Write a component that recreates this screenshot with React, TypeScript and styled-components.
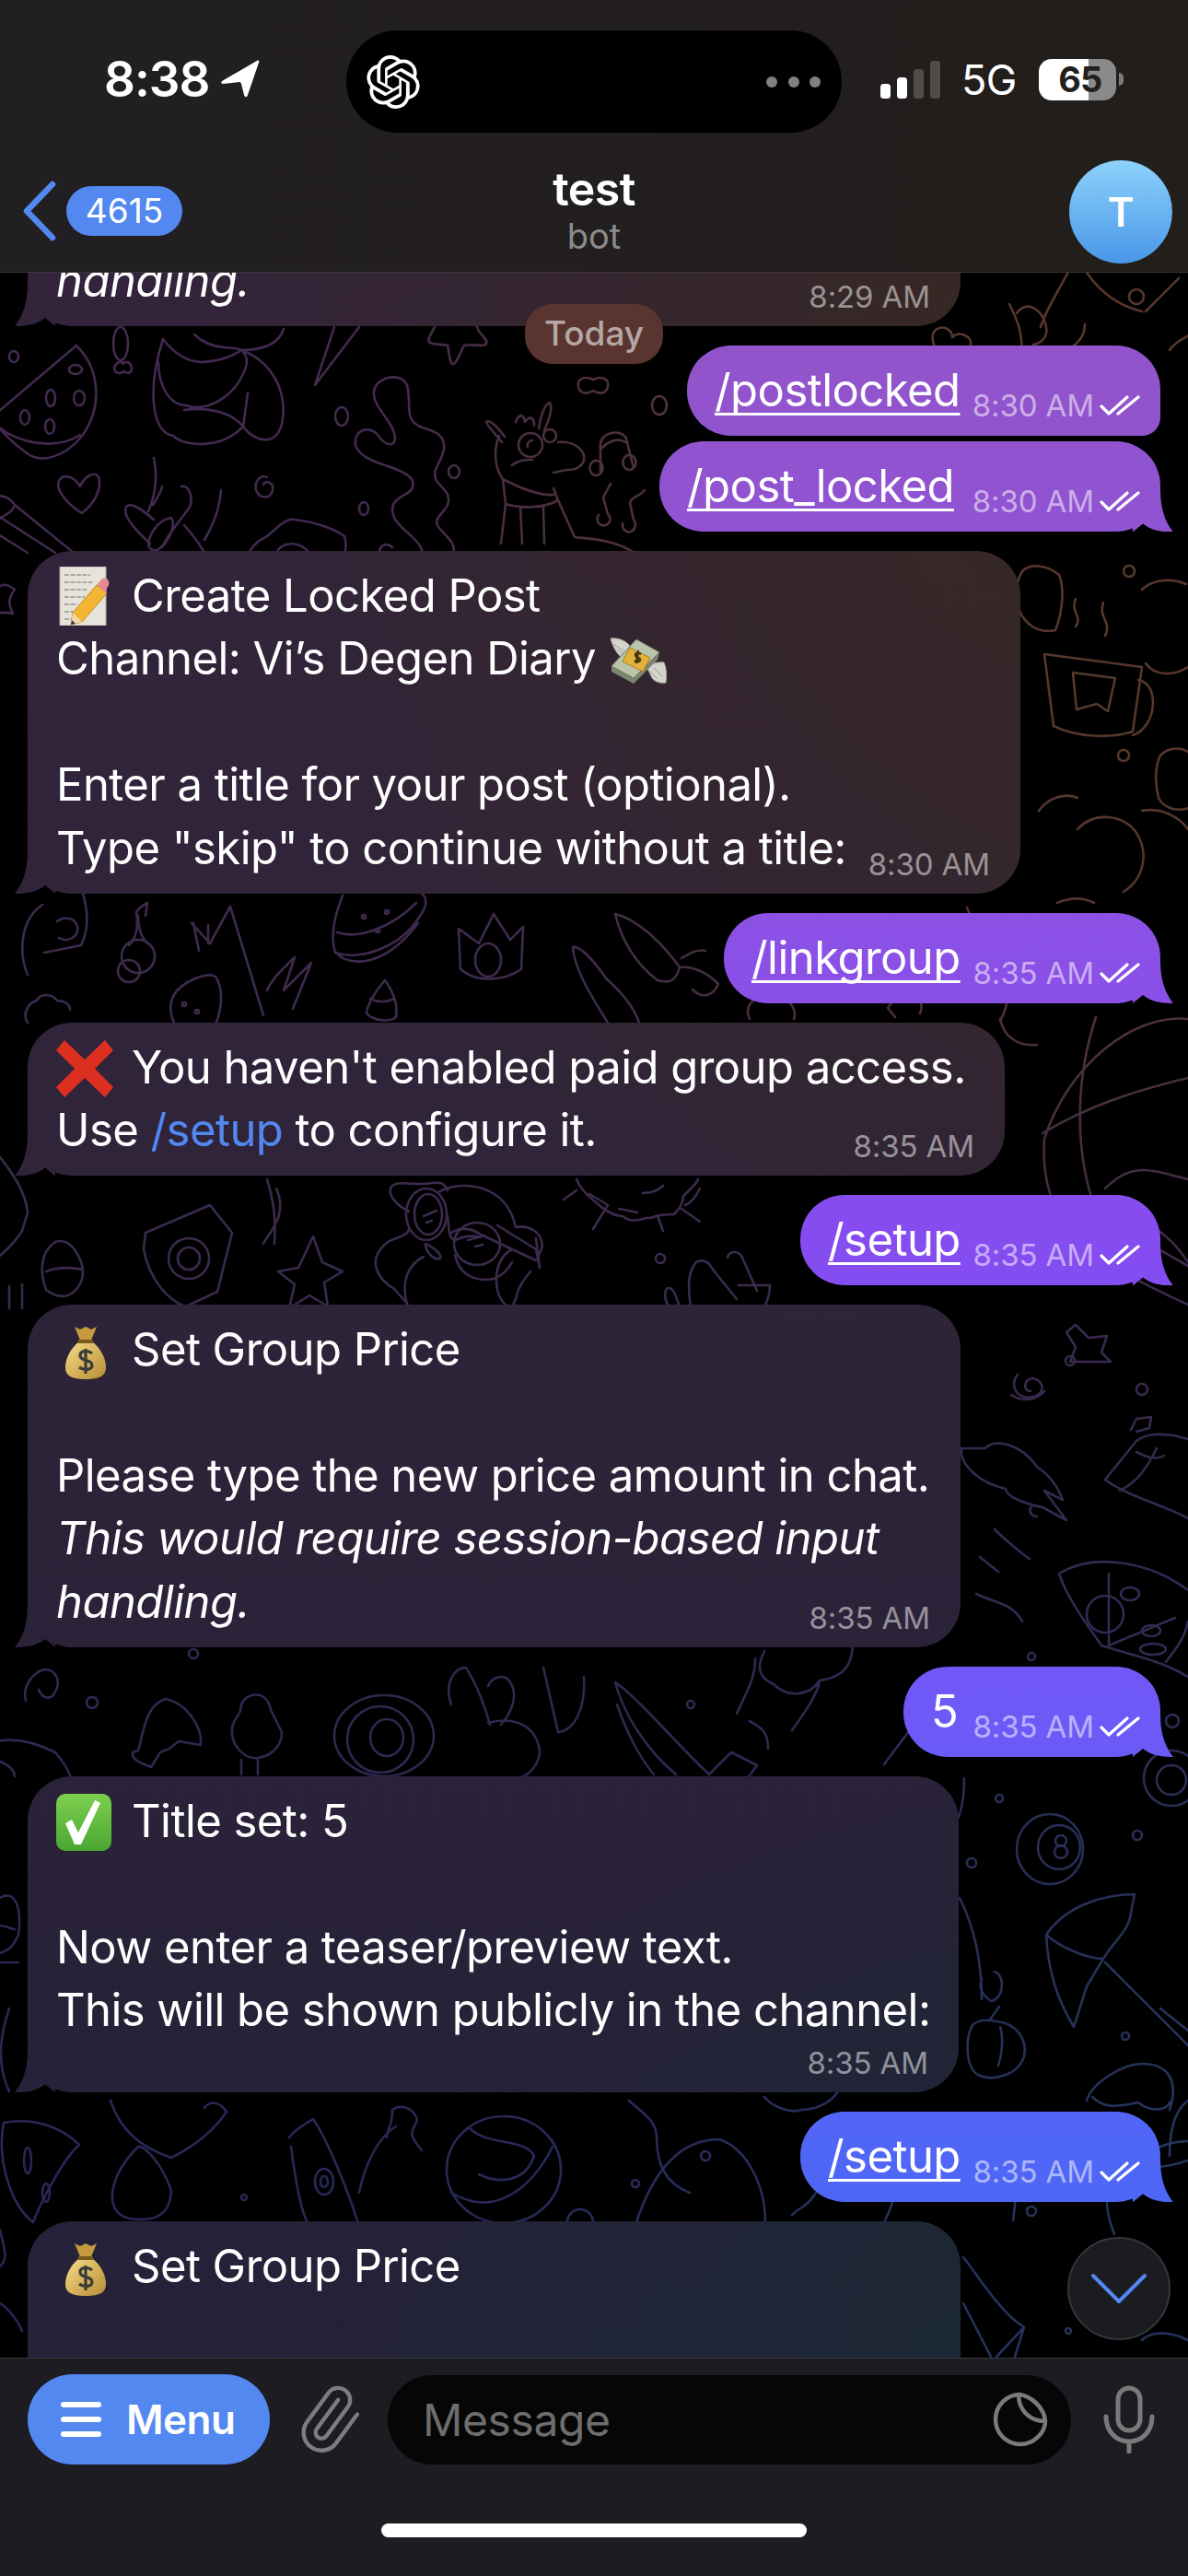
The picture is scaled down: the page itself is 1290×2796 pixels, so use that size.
import React from "react";
import styled, { createGlobalStyle } from "styled-components";
import { Paperclip } from "lucide-react";
import { SiOpenai } from "react-icons/si";

const Global = createGlobalStyle`
  html, body { margin: 0; padding: 0; background: #000; }
  body { font-family: Inter, "Liberation Sans", sans-serif; color: #fff; -webkit-font-smoothing: antialiased; }
`;

const OUT_BG = `linear-gradient(180deg,#9a50b8 0px,#9254cc 420px,#8b50e6 1040px,#864cf0 1340px,#6e59f7 1860px,#4f66f6 2340px,#4a6af6 2796px) fixed`;
const IN_BG = `radial-gradient(1100px 1300px at 100% 300px,#38291f,rgba(56,41,31,0)) fixed,radial-gradient(1000px 800px at 100% 2700px,#182a33,rgba(24,42,51,0)) fixed,linear-gradient(180deg,#34233b 0px,#30243a 1200px,#292238 2000px,#22213a 2796px) fixed`;

const Screen = styled.div`
  position: relative;
  width: 1290px;
  height: 2796px;
  overflow: hidden;
  display: flex;
  flex-direction: column;
  background: #000;
`;
const Top = styled.header`
  flex: none;
  height: 295px;
  background: linear-gradient(90deg, #221f23, #221e1b);
  border-bottom: 1px solid #3a3638;
  position: relative;
  z-index: 2;
`;
const StatusBar = styled.div`
  display: grid;
  grid-template-columns: 376px 538px 1fr;
  height: 144px;
  padding-top: 33px;
  box-sizing: border-box;
`;
const StatusLeft = styled.div`
  display: flex;
  align-items: center;
  padding: 0 0 6px 113px;
  gap: 13px;
  font-weight: 600;
  font-size: 53px;
  letter-spacing: -1px;
`;
const Island = styled.div`
  height: 111px;
  background: #000;
  border-radius: 56px;
  display: flex;
  align-items: center;
  justify-content: space-between;
  padding: 0 23px 0 22px;
`;
const Dots = styled.div`
  display: flex;
  gap: 11.5px;
  & > i {
    width: 12px;
    height: 12px;
    border-radius: 50%;
    background: #808080;
  }
`;
const StatusRight = styled.div`
  display: flex;
  align-items: flex-start;
  padding: 33px 0 0 42px;
`;
const Signal = styled.div`
  display: flex;
  align-items: flex-end;
  gap: 7px;
  height: 41px;
`;
const SignalBar = styled.i<{ $h: number; $on?: boolean }>`
  width: 11px;
  height: ${(p) => p.$h}px;
  border-radius: 3.5px;
  background: ${(p) => (p.$on ? "#fff" : "#504c4a")};
`;
const Net = styled.span`
  font-size: 45px;
  line-height: 41px;
  margin: 0 24px 0 23px;
  font-weight: 400;
  letter-spacing: -0.6px;
`;
const Battery = styled.div`
  width: 84px;
  height: 45px;
  margin-top: -2px;
  border-radius: 14px;
  background: linear-gradient(90deg, #fff 64%, #8a8a8a 64%);
  color: #221f1e;
  font-weight: 700;
  font-size: 38px;
  line-height: 45px;
  text-align: center;
  padding-left: 6px;
  box-sizing: border-box;
  position: relative;
  letter-spacing: -1px;
  &::after {
    content: "";
    position: absolute;
    right: -8px;
    top: 15px;
    width: 5px;
    height: 14px;
    background: #7c7c7c;
    border-radius: 0 6px 6px 0;
  }
`;
const Nav = styled.div`
  display: grid;
  grid-template-columns: 1fr auto 1fr;
  align-items: start;
  padding: 30px 17px 0 17px;
`;
const Back = styled.div`
  display: flex;
  align-items: center;
  gap: 10px;
  padding: 22px 0 0 7px;
`;
const Badge = styled.span`
  width: 126px;
  height: 54px;
  border-radius: 27px;
  background: #5288f0;
  font-size: 37px;
  line-height: 54px;
  text-align: center;
`;
const Title = styled.div`
  text-align: center;
  padding-top: 3px;
  & > b {
    display: block;
    font-size: 50px;
    line-height: 56px;
    font-weight: 600;
    letter-spacing: -0.6px;
  }
  & > span {
    display: block;
    font-size: 38px;
    line-height: 46px;
    color: #8b8b8b;
  }
`;
const Avatar = styled.div`
  justify-self: end;
  width: 112px;
  height: 112px;
  border-radius: 50%;
  background: linear-gradient(180deg, #8cd2fb, #4a96e8);
  font-size: 44px;
  font-weight: 600;
  line-height: 112px;
  text-align: center;
`;

const Chat = styled.main`
  flex: 1;
  min-height: 0;
  position: relative;
  overflow: hidden;
`;
const Doodles = styled.svg`
  position: absolute;
  left: 0;
  top: -296px;
  width: 1290px;
  height: 2796px;
`;
const List = styled.div`
  position: relative;
  display: flex;
  flex-direction: column;
  gap: 20.6px;
  padding: 0 30px;
  margin-top: -314px;
`;
const Group = styled.div`
  display: flex;
  flex-direction: column;
  gap: 6px;
`;
const BubbleBox = styled.div<{ $out?: boolean; $w: number; $tail?: boolean; $pb?: number }>`
  position: relative;
  box-sizing: border-box;
  width: ${(p) => p.$w}px;
  align-self: ${(p) => (p.$out ? "flex-end" : "flex-start")};
  padding: 15px ${(p) => (p.$out ? 22 : 20)}px ${(p) => p.$pb ?? 15}px ${(p) => (p.$out ? 30 : 31)}px;
  border-radius: 48px;
  ${(p) => (p.$out && !p.$tail ? "border-bottom-right-radius: 20px;" : "")}
  background: ${(p) => (p.$out ? OUT_BG : IN_BG)};
  font-size: 49px;
  line-height: 68.4px;
  letter-spacing: -0.55px;
  white-space: pre;
  ${(p) =>
    p.$tail
      ? `&::after {
    content: "";
    position: absolute;
    bottom: 0;
    ${p.$out ? "right" : "left"}: -14px;
    width: 44px;
    height: 46px;
    background: ${p.$out ? OUT_BG : IN_BG};
    clip-path: path("${
      p.$out
        ? "M30 0 C30 22 36 36 44 46 C30 46 20 44 11 37 L0 46 L0 0 Z"
        : "M14 0 C14 22 8 36 0 46 C14 46 24 44 33 37 L44 46 L44 0 Z"
    }");
  }`
      : ""}
`;
const Meta = styled.div<{ $out?: boolean }>`
  position: absolute;
  z-index: 1;
  right: ${(p) => (p.$out ? 22 : 33)}px;
  bottom: ${(p) => (p.$out ? 15 : 14)}px;
  display: flex;
  align-items: center;
  gap: 6px;
  font-size: 33px;
  line-height: 36px;
  letter-spacing: -0.1px;
  color: ${(p) => (p.$out ? "rgba(255,255,255,.55)" : "rgba(255,255,255,.5)")};
`;
const Cmd = styled.a`
  color: #fff;
  text-decoration: underline;
  text-decoration-thickness: 3px;
  text-underline-offset: 7px;
  text-decoration-skip-ink: none;
`;
const BlueCmd = styled.span`
  color: #5288f0;
`;
const EmojiSlot = styled.span<{ $w: number; $x?: number }>`
  display: inline-block;
  width: ${(p) => p.$w}px;
  height: 1px;
  position: relative;
  & > svg {
    position: absolute;
    left: ${(p) => p.$x ?? 0}px;
    bottom: -15px;
  }
`;
const DateChip = styled.div`
  position: absolute;
  z-index: 1;
  top: 34px;
  left: 50%;
  transform: translateX(-50%);
  width: 150px;
  height: 65px;
  border-radius: 30px;
  background: #5a352f;
  color: #b3a8a5;
  font-size: 37px;
  line-height: 64px;
  font-weight: 500;
  text-align: center;
`;
const JumpDown = styled.div`
  position: absolute;
  z-index: 1;
  right: 19px;
  bottom: 19px;
  width: 112px;
  height: 112px;
  box-sizing: border-box;
  border-radius: 50%;
  background: #1b1c21;
  border: 2px solid #34363c;
  display: flex;
  align-items: center;
  justify-content: center;
`;

const Footer = styled.footer`
  flex: none;
  height: 236px;
  background: #1c1c22;
  border-top: 1px solid #38383c;
  position: relative;
  z-index: 2;
  display: flex;
  flex-direction: column;
  align-items: center;
`;
const InputRow = styled.div`
  align-self: stretch;
  display: flex;
  align-items: center;
  padding: 17px 0 0 30px;
`;
const MenuButton = styled.div`
  width: 263px;
  height: 98px;
  border-radius: 49px;
  background: #5288f0;
  display: flex;
  align-items: center;
  gap: 27px;
  padding-left: 36px;
  box-sizing: border-box;
  font-size: 44px;
  font-weight: 600;
  letter-spacing: -0.5px;
`;
const Burger = styled.span`
  display: flex;
  flex-direction: column;
  gap: 10px;
  & > i {
    width: 44px;
    height: 6px;
    border-radius: 3px;
    background: #fff;
  }
`;
const ClipSlot = styled.div`
  width: 128px;
  display: flex;
  justify-content: center;
  color: #7d7d7d;
`;
const InputBox = styled.div`
  width: 742px;
  height: 97px;
  border-radius: 48px;
  background: #060606;
  display: flex;
  align-items: center;
  justify-content: space-between;
  box-sizing: border-box;
  padding: 0 25px 0 38px;
  font-size: 48px;
  color: #6d6d6d;
  letter-spacing: -0.4px;
`;
const MicSlot = styled.div`
  margin-left: 35px;
  display: flex;
`;
const HomeBar = styled.div`
  width: 462px;
  height: 15px;
  border-radius: 8px;
  background: #fff;
  margin-top: 64px;
`;

const Checks = () => (
  <svg width="44" height="24" viewBox="0 0 44 24" fill="none" stroke="#fff" strokeWidth="3.2" strokeLinecap="round" strokeLinejoin="round">
    <path d="M2 13l8 8L30 3M20 21L42 3" />
  </svg>
);

const MemoEmoji = () => (
  <svg width="58" height="64" viewBox="0 0 58 64">
    <rect x="4" y="0" width="50" height="64" fill="#e6e3da" stroke="#b5b2a8" strokeWidth="1" />
    <g stroke="#6c6c6c" strokeWidth="1" fill="none">
      <path d="M9 9h28M9 17h30M9 25h24M9 33h22M9 41h14M9 49h12M9 57h8" strokeDasharray="5 1.5" />
    </g>
    <path d="M18 50L44 20l11 9-27 31-12 3z" fill="#f2b632" stroke="#c58a1e" strokeWidth="1" />
    <path d="M44 20l5-6c2-2 5-2 7 0l1 2c1 3 0 5-2 7l-1 6z" fill="#e98b8e" />
    <path d="M16 63l2-13 10 10z" fill="#f0d7ac" />
    <path d="M16 63l1-5 4 4z" fill="#333" />
  </svg>
);
const WingsEmoji = () => (
  <svg width="64" height="56" viewBox="0 0 64 56">
    <path d="M3 2c8-1 16 2 21 8l-8 13C10 20 5 10 3 2z" fill="#d4d4cc" stroke="#a3a39b" />
    <path d="M6 8l12 8M10 14l8 6" stroke="#a3a39b" fill="none" />
    <path d="M41 30c6 0 14-3 20-2 3 7 3 15 2 22-6 1-12-1-15-5z" fill="#d4d4cc" stroke="#a3a39b" />
    <path d="M50 34l10 10M46 38l8 8" stroke="#a3a39b" fill="none" />
    <path d="M31 3l25 14-2 8-26 26-24-13 0-6z" fill="#7d8570" />
    <path d="M31 3l25 14-28 28L4 32z" fill="#b9c4aa" stroke="#6f7a60" />
    <path d="M24 12l22 11-8 15-22-11z" fill="#e3b23a" stroke="#a87e1a" />
    <path d="M36 19c-3-2-6-1-6 1 0 3 5 2 5 5 0 2-3 3-6 1M33 15l-2 14" stroke="#3f3210" strokeWidth="2.4" fill="none" />
  </svg>
);
const CrossEmoji = () => (
  <svg width="62" height="62" viewBox="0 0 62 62">
    <path d="M9 0l22 21L53 0l9 11-20 20 20 20-9 11-22-21L9 62 0 51l20-20L0 11z" fill="#dc2f20" />
  </svg>
);
const BagEmoji = () => (
  <svg width="44" height="58" viewBox="0 0 44 58">
    <defs>
      <linearGradient id="bagG" x1="0" x2="1" y1="0" y2="1">
        <stop offset="0" stopColor="#f6de88" />
        <stop offset="1" stopColor="#b78c34" />
      </linearGradient>
    </defs>
    <path d="M10 1l6 3 6-3 6 3 6-3-7 17H17z" fill="#c89a3e" />
    <path d="M15 17h14c10 8 15 19 15 28 0 9-6 13-22 13S0 54 0 45c0-9 5-20 15-28z" fill="url(#bagG)" />
    <rect x="14" y="15" width="16" height="4" fill="#7a5a1c" />
    <path d="M29 30c-5-4-13-3-13 2 0 7 13 4 13 11 0 5-9 6-14 2M22 25v27" stroke="#3b3b3b" strokeWidth="3.2" fill="none" />
  </svg>
);
const CheckEmoji = () => (
  <svg width="60" height="62" viewBox="0 0 60 62">
    <defs>
      <linearGradient id="chkG" x1="0" x2="0" y1="0" y2="1">
        <stop offset="0" stopColor="#7dcf4f" />
        <stop offset="1" stopColor="#4aa632" />
      </linearGradient>
    </defs>
    <rect width="60" height="62" rx="10" fill="url(#chkG)" />
    <path d="M10 32l7-4 7 14L42 7l6 3-21 45h-7z" fill="#fff" />
  </svg>
);

const c = (x: number, y: number, r: number) => `M${x - r} ${y}a${r} ${r} 0 1 0 ${2 * r} 0a${r} ${r} 0 1 0 ${-2 * r} 0`;
const e = (x: number, y: number, rx: number, ry: number) => `M${x - rx} ${y}a${rx} ${ry} 0 1 0 ${2 * rx} 0a${rx} ${ry} 0 1 0 ${-2 * rx} 0`;

const DOODLES: string[] = [
  // watermelon
  "M-2 447L83 375C108 400 112 440 90 472C72 495 45 505 28 491C16 482 6 473 -2 463M-2 463C18 480 60 490 87 472",
  e(82, 401, 7, 5), e(55, 432, 5, 9), e(86, 432, 6, 8), e(27, 453, 5, 8), e(54, 463, 5, 8), e(15, 387, 5, 6),
  // shrimp
  e(131, 373, 8, 18), "M124 399c2-6 8-8 10-4 2-4 8-2 9 4 0 8-6 6-9 4-2 3-10 3-10-4z",
  // bear
  "M177 368C160 420 164 470 188 473C200 485 240 488 264 463C276 480 300 485 306 460C314 420 290 390 262 380M177 368C190 385 205 393 220 393C240 392 255 385 262 380M172 393C172 420 185 440 202 440C225 448 258 430 268 395C268 390 268 385 262 380M200 445C220 442 250 445 264 463M269 427L264 463M211 363C220 372 232 376 243 377C255 378 260 378 262 380M262 380C280 380 302 376 308 357",
  // cone
  "M342 418L363 355M342 418L390 355",
  // star-leaf
  "M472 355c-4 8-8 12-6 16 4 4 14 2 20 4 2 8 2 20 6 20 4 0 8-14 12-20 8-2 22 2 24-2 2-6-8-10-10-18",
  // chip heart
  "M628 420c-2-10 8-12 16-8 8-4 18-2 16 8-2 8-10 8-16 4-6 4-14 4-16-4z",
  // squiggle
  "M459 600C455 580 420 570 427 548C432 535 452 538 448 522C440 505 392 505 386 483C384 465 402 462 410 472C420 486 432 486 428 470C424 455 404 440 406 425C408 408 440 402 443 422C446 445 440 455 456 463C470 468 484 470 482 488C478 505 468 510 474 522C482 532 490 536 486 548C480 560 470 562 476 572C484 582 496 590 492 600M412 600c0-8 8-12 14-6",
  e(371, 452, 7, 10), e(493, 512, 6, 7), e(395, 552, 5, 7), e(716, 440, 8, 10),
  // llama
  "M545 480c-6-8-18-20-17-22 4-4 14 8 20 16M560 458c2-6 8-12 10 0 6-8 10-4 10 4M585 465c2-12 6-26 12-28 4 6-2 22-6 30M542 473C535 490 538 510 546 520M546 520C565 530 585 538 601 537M606 480C625 478 636 490 634 500C630 510 620 510 615 510L601 513M546 520L549 547C565 552 590 552 606 543L601 530M549 547L544 590M565 550L567 590M590 550L591 590M606 543L624 583C640 585 665 585 689 600M556 505c8-6 14-6 22-6",
  e(576, 483, 13, 13), c(597, 473, 7), "M578 478c-4 0-6 4-5 7",
  // notes
  "M652 514V482C652 470 674 464 680 476L688 508M652 514a7 8 0 1 1 .1 -.1M688 508a7 8 0 1 1 .1 -.1M654 486C660 480 670 474 679 480",
  "M663 525L655 540L660 558a7 7 0 1 1-10 1M700 532c-6 8-14 6-16 14l4 18a7 8 0 1 1-12 4",
  // heart
  "M89 557C70 545 60 530 64 522c4-8 16-6 23 6c4-10 16-18 20-10c4 12-4 28-18 39z",
  // bird
  "M137 550c6-6 18 4 30 14M197 528c8-2 12 10 10 20-6 12-20 24-30 44l-14 12M186 562c8 12-14 46-24 32-4-8 8-30 24-32zM200 570c12 14 20 24 28 42M137 550c-4 8 6 22 26 40",
  "M167 497c4 20 2 40-6 58M176 528c-2 8-6 14-10 20M240 532c-2 24-10 40-18 54",
  // swirl
  "M290 518c-8-4-14 6-12 14 4 10 16 10 18 0 2-8-8-12-10-6",
  // pencil
  "M-2 538c8 0 14 4 18 10L80 600M-2 560L60 600M-2 580L30 600M16 548c-2 8-10 10-18 16",
  // lettuce
  "M270 600c6-10 12-14 20-18 10-8 20-20 30-18 18 2 40 8 54 18 2 6 2 14 0 18M300 600c6-12 24-14 36 0",
  // brown top right
  "M1160 295c-10 20-24 40-30 60M1104 340c10-14 24-6 30 8 6 14 0 24-12 26M1180 296c14 20 34 36 60 42M1244 338l36-36M1270 380c10-14 24-14 30-24M1158 380c16-8 20-18 20-28",
  "M1018 382c-6-10-8-18-2-24 8-6 18 0 18 8 8-8 22 0 20 8-4 10-18 8-36 8z",
  c(1234, 322, 8),
  "M870 296c0 10 10 20 10 36M735 520c14-8 22-2 30 8",
  // mug
  "M1134 710l106 14-10 70c-24 8-62 6-86-6zM1236 738c24 4 20 52-6 60M1165 730l46 6-8 36-12-8-22 6z",
  "M1168 680c8-10-6-16 0-30 M1200 690c8-14-8-20-2-36",
  // hat & others
  "M1110 620c8-8 26-8 40 4 6 14 4 40-4 60-18 4-34-6-40-24-4-16-2-30 4-40z",
  "M1240 640c10-10 30-14 48-6M1244 720c10 14 30 14 46 4",
  c(1226, 620, 6),
  "M1260 820c10-10 26-10 34 0v56c-14 6-30 2-36-10-4-16-4-34 2-46z",
  c(1220, 820, 6),
  "M1170 900c18-20 50-16 64 4 14 22 8 50-14 64M1240 880c20-4 40 6 50 20M1128 880c10-14 28-20 42-14",
  "M1148 980c14-6 28-6 40 0M1050 985c6 20 26 36 50 30",
  // left ear mushroom
  "M30 1058c-10-24-8-60 16-76M90 970c6 20 6 40-2 56l-40 8M62 1000c8-6 20-4 22 6 2 10-10 18-20 12",
  "M-6 640c10-8 14-6 22 0-6 8-8 14-2 26-8-2-14-2-26 4",
  // cherries
  "M140 1026c10-10 10-24 8-36M160 1024c-6-6-10-14-10-30",
  c(150, 1038, 18), c(140, 1054, 12),
  "M148 990c4-6 8-8 12-10l-2 14",
  "M208 1002l20 22 22-40 36 118M210 1002l6 30M226 1024v-20",
  "M290 1075c6-14 20-26 30-36l-12 36 30-30-20 50",
  // burger
  "M372 972c-8 20-14 44-8 62 28 10 74-8 92-40 8-10 8-20 2-24M366 1034c4 8 20 12 36 8 22-6 40-24 52-40M366 1012c24 8 60-6 86-32",
  c(395, 995, 2), c(420, 990, 2), c(410, 1010, 2),
  // crown
  "M498 1008l22 16 16-32 18 28 14-14-2 46c-20 14-50 14-66 0z",
  e(530, 1042, 14, 18),
  // carrot
  "M668 992c24 6 50 30 70 58-4 14-10 18-24 14-22-16-40-44-46-72zM738 1050c14-2 30 6 42 18-6 14-18 16-28 6M740 1040c10-6 18-10 26-8",
  // leaf
  "M622 1028c8-2 24 16 36 34 16 14 30 30 36 48M622 1028c2 26 22 56 38 82",
  // strawberry & candy
  "M190 1112c-10-20-4-36 14-46 10-6 24-10 30-6 8 12 8 32 0 52", c(200, 1090, 2), c(214, 1098, 2),
  "M418 1064c-14 16-20 30-20 36 8 8 24 10 32 4 2-12-2-26-12-40zM402 1084c8 4 18 4 26 0",
  "M814 1106c-6-12 2-26 24-26 18 0 28 16 24 26M30 1110c-6-8 0-22 10-24 4-8 16-8 22 0 8 0 14 4 14 10",
  "M1086 1106c4 20 20 30 40 28 M1090 1060c6 14 6 30-4 48",
  "M960 1080l10 6-6 8 8 10M985 1080c14-2 18 10 14 20",
  // globe
  "M1290 1106c-60-6-130 50-156 130-6 90 44 130 156 180M1190 1104c-20 60-26 140 0 210M1132 1230c50-30 100-46 158-60M1290 1280c-40-10-60-20-90 10",
  "M1240 1320c20 20 30 20 50 50M1230 1340l60 34",
  // camera
  "M158 1338l70-30 24 30-16 64-34 16c-20-6-40-30-46-62z", c(205, 1366, 22), c(205, 1366, 12),
  // star
  "M340 1342l10 28 22 10-20 12 4 26-20-12-22 14 6-26-18-14 22-4z",
  // glasses creature
  "M444 1315C430 1308 420 1296 425 1288C432 1280 448 1288 470 1284C482 1282 484 1288 486 1292M476 1294C500 1280 550 1284 560 1332C580 1328 596 1346 585 1362",
  e(463, 1318, 22, 28), e(465, 1318, 15, 22), e(518, 1350, 25, 23),
  "M494 1362c4 20 20 30 42 26c10-4 16-10 20-18M540 1330L582 1356l4 20l-4-32M486 1320c2 12 0 24 8 26c6-2 12-6 24-4M490 1338c10-6 20-6 32 2l60 28",
  "M444 1335c-4 10-20 6-30 20-12 14-6 32 14 44l16 18M460 1364c-16 8-22 24-20 40c0 6 2 12 4 14M556 1356c-12 6-20 22-16 44 2 10 8 16 12 18M576 1380c-8 10-14 18-16 30l-4 8M462 1350c10 4 18 12 16 16-6 2-16-6-16-16z",
  "M460 1320l14-6M463 1327l6-2M508 1346l18-5M516 1353l8-2",
  // splash
  "M626 1280c4 10 12 18 20 24 8 8 20 16 30 16 12 10 24 0 30 2 10-4 22-4 26-4 6-6 10-14 10-20 6-6 14-12 16-18M626 1292l-14 10M640 1296l20 12M660 1308l-16 26M672 1312l20 4M714 1320l6 16M740 1312l20 14M760 1290c-4 8-10 16-16 18M698 1295c10 0 18-4 22-8",
  c(717, 1366, 5),
  // fingers
  "M750 1418c-4-24-2-40 6-48 8-4 14 0 18 8l26 32M790 1365c2-8 12-8 16 0l16 36M802 1395h34c0 8-2 16-6 23M726 1418c-6-10-4-20 0-20 6 0 8 10 12 20",
  // mushroom
  "M50 1400c-6-16-8-40 10-52 18-6 30 20 30 34 0 14-16 36-40 18zM50 1380c16-6 30-4 40-2",
  "M10 1420v-24M24 1420v-26",
  "M0 1256c14 18 28 38 30 60l-6 20c-10 16-20 24-28 30",
  "M300 1290c14 30-10 50-14 60M290 1280c6 20 10 40 8 70",
  // right area squid etc
  "M1070 1572c10-12 40-4 56 20 6 4 20 14 28 36l-20-10 24 32-26-14c-20-4-40-12-40-20-26-6-50-24-48-44zM1120 1636c-4 4 0 10 6 10",
  "M1168 1438l14 14 20-2-6 18 10 10-20 0-12 0-12 0 6-16-10-16z",
  "M1105 1492c-10 12 0 28 16 24 14-2 14-18 0-20-10 2-10 14-2 14M1134 1510c-8 10-24 12-36 4",
  c(1162, 1477, 5), c(1240, 1508, 6),
  "M1200 1606l34-42c10-8 24-8 40-6l16 4M1200 1606c24 18 60 26 90 42M1216 1618c20-10 30-26 40-46M1234 1576c8 4 20 10 30 4M1228 1552l6-12 16-2-2 12-14 4",
  "M1150 1708c40-24 100-12 140 18M1150 1708c10 30 34 60 46 78 30 10 60 14 94 34M1204 1708v78l72-30M1290 1760c-4 20-14 30-24 44",
  c(1200, 1752, 20), e(1227, 1730, 10, 7), e(1252, 1790, 14, 6), e(1250, 1770, 10, 6),
  "M1080 1660c10 10 34 30 38 32M1060 1730c20 10 40 10 50 30M1064 1690l20 16",
  c(1120, 1798, 4),
  c(1272, 1930, 30), c(1272, 1932, 16), c(1273, 1868, 7), c(1085, 1952, 4),
  // 8 ball
  e(1140, 2007, 36, 38), e(1150, 2005, 23, 24), e(1152, 1998, 6, 6), e(1152, 2010, 7, 7), c(1235, 1992, 5), c(1055, 2022, 5),
  // left mid
  "M28 1846c-4-14 6-30 20-34 14 0 18 14 12 24-4 10-14 8-18-2",
  c(100, 1848, 6), c(210, 1795, 5),
  "M150 1900c6-20 8-50 30-56 22 4 40 30 38 50l-24-4-10 8-10 4-10 16c-10-4-22-8-20-16z",
  "M262 1850c6-14 28-16 32 6l12 24c0 16-12 26-26 28-16 2-30-16-28-32 2-14 10-12 10-26z", "M262 1910v16M280 1910v16",
  c(413, 1888, 36), e(417, 1884, 54, 44), e(420, 1886, 18, 20),
  // rabbit
  "M490 1850c-8-20 2-40 16-40 10 16 20 40 26 62M530 1830c4-10 18-14 24-4 8 12 4 30-10 46M530 1870c30-8 52 4 56 30 0 14-10 26-22 30M590 1810l16 70c20-2 30-30 28-60",
  // boat
  "M668 1826c8 30 30 70 66 100M668 1826c24 16 60 60 102 100M670 1850c10 30 26 60 40 76M770 1926l24-24 28 14-10 14M814 1868c14 8 20 12 20 30M820 1800c0 20-6 30-20 60",
  // cloud tree
  "M830 1792c-10 20-4 30 10 36 16 16 40 12 50-4 30-4 34-20 36-36M890 1824c-2 16-20 40-30 54",
  c(750, 1850, 4),
  "M960 1915l30-40M-4 1890c20-4 40 0 64 12 10 12 18 24 20 40M-4 1910c10 4 20 10 20 18",
  "M1047 1930c0 40-10 54-20 60",
  // left lower
  "M0 2060c16-10 24 10 20 40-8 16-10 16-20 20M0 2090c8 0 12 4 16 4",
  "M1042 2060c20 40 24 80 24 110M1080 2140c12 4 10 30-4 32-8-6-14-12-10-24",
  // umbrella
  "M1136 2100c20-30 60-44 96-44l-4 20c-2 20-18 30-30 50 -18 0-46-12-62-26zM1136 2100c2 40 12 70 30 100l14-44 18-30M1200 2130l90 90M1260 2180l30 24",
  // tomato
  "M1056 2198c-8 14-8 46 6 54 16 8 44 0 50-20 4-18-8-36-30-38-10-2-20-2-26 4zM1075 2192l10-14M1086 2200c4 12 2 30-2 42",
  c(1222, 2210, 4),
  "M1180 2280c6-20 40-40 60-40 30 0 40 20 30 50M1186 2276c14 14 30 10 50 6 12 10 30 10 34 0",
  "M830 2276c10 12 30 18 40 14 10 0 30-4 40-20",
  // bottom band
  "M4 2304c-8 40 8 90 32 108 12-30 34-70 50-84-20-20-50-30-82-24z", e(30, 2345, 4, 14), e(50, 2380, 4, 10),
  "M120 2280c10 30 30 50 66 62 20-10 44-26 60-50-10-14-20-10-24-4",
  "M150 2330c-30 30-40 70-10 78 30 4 44-4 46-30 -10-30-30-50-36-48z",
  "M314 2320c8-10 20-16 26-20 14 20 40 80 54 130M316 2330c4 30 10 70 18 82",
  e(352, 2368, 10, 14), e(352, 2368, 4, 6),
  "M390 2380c6-30 20-60 40-72M420 2320c0-10 6-10 6-30 14-10 30 6 26 14-6 10-8 14 6 30",
  e(547, 2355, 62, 58), "M510 2310c20 20 60 10 70 30-10 30-40 30-60 20M600 2330c-20 40-60 80-110 50",
  c(265, 2385, 3),
  "M683 2280c10 10 30 20 30 40 0 30 10 50 36 60", c(766, 2340, 5), c(690, 2370, 4),
  "M691 2412c20-60 50-90 90-90 30 10 50 50 50 90",
  "M860 2404c10-10 14-6 26-24M960 2412c10-20 14-30 10-60",
  c(630, 2412, 14),
  "M900 2440l6 20M1100 2320c6 40 4 60 0 90",
  "M1046 2450c16 20 40 60 66 76l-30 32M1046 2500l30 58M1112 2526l-10 32",
  "M1200 2450c-12 20-24 40-30 60M1240 2540c10-10 30-10 50 0",
  c(1160, 2530, 3),
  "M1260 2330c10-4 20-6 30-6M1290 2280c-14 10-20 30-20 60",
  "M1210 2425c-8-20-14-50 0-80 30 10 50 10 80 0",
  c(1120, 2400, 5),
  "M0 2420c4 20 10 30 0 40M0 2500c10 6 20 20 24 30",
  "M0 2130l20 0M10 2180c-10 30-14 60 0 90",
  "M1096 330c10 20 14 30 14 60",
];

const Bg = () => (
  <Doodles viewBox="0 0 1290 2796" fill="none">
    <defs>
      <linearGradient id="dv" x1="0" y1="296" x2="0" y2="2560" gradientUnits="userSpaceOnUse">
        <stop offset="0" stopColor="#44294f" />
        <stop offset=".45" stopColor="#3c2a4c" />
        <stop offset=".75" stopColor="#2c2750" />
        <stop offset="1" stopColor="#25285a" />
      </linearGradient>
      <radialGradient id="db" cx="1290" cy="500" r="900" gradientUnits="userSpaceOnUse">
        <stop offset="0" stopColor="#58382a" />
        <stop offset=".5" stopColor="#54362c" />
        <stop offset="1" stopColor="#54362c" stopOpacity="0" />
      </radialGradient>
      <radialGradient id="dt" cx="1290" cy="2400" r="800" gradientUnits="userSpaceOnUse">
        <stop offset="0" stopColor="#24365c" />
        <stop offset="1" stopColor="#24365c" stopOpacity="0" />
      </radialGradient>
      <mask id="dm" maskUnits="userSpaceOnUse" x="0" y="0" width="1290" height="2796">
        <g fill="none" stroke="#fff" strokeWidth="2.6" strokeLinecap="round" strokeLinejoin="round">
          {DOODLES.map((d, i) => (
            <path key={i} d={d} />
          ))}
        </g>
      </mask>
    </defs>
    <g mask="url(#dm)">
      <rect width="1290" height="2796" fill="url(#dv)" />
      <rect width="1290" height="2796" fill="url(#db)" />
      <rect width="1290" height="2796" fill="url(#dt)" />
    </g>
  </Doodles>
);

type BubbleProps = { out?: boolean; w: number; tail?: boolean; time: string; pb?: number; children: React.ReactNode };
const Bubble = ({ out, w, tail, time, pb, children }: BubbleProps) => (
  <BubbleBox $out={out} $w={w} $tail={tail} $pb={pb}>
    {children}
    <Meta $out={out}>
      {time}
      {out && <Checks />}
    </Meta>
  </BubbleBox>
);

const SetPrice = () => (
  <>
    <EmojiSlot $w={82} $x={10}>
      <BagEmoji />
    </EmojiSlot>
    {"Set Group Price\n\nPlease type the new price amount in chat.\n"}
    <em>{"This would require session-based input\nhandling."}</em>
  </>
);

export default function App() {
  return (
    <Screen>
      <Global />
      <Top>
        <StatusBar>
          <StatusLeft>
            8:38
            <svg width="42" height="41" viewBox="0 0 42 41">
              <path d="M1 23L39 1c2-1 3 0 2 2L29 38c-1 3-3 3-4 0l-3-12c0-1-1-2-2-2L2 26c-2 0-2-2-1-3z" fill="#fff" />
            </svg>
          </StatusLeft>
          <Island>
            <SiOpenai size={58} color="#fff" />
            <Dots>
              <i />
              <i />
              <i />
            </Dots>
          </Island>
          <StatusRight>
            <Signal>
              <SignalBar $h={16} $on />
              <SignalBar $h={23} $on />
              <SignalBar $h={32} />
              <SignalBar $h={41} />
            </Signal>
            <Net>5G</Net>
            <Battery>65</Battery>
          </StatusRight>
        </StatusBar>
        <Nav>
          <Back>
            <svg width="38" height="66" viewBox="0 0 38 66" fill="none" stroke="#5288f0" strokeWidth="6.5" strokeLinecap="round" strokeLinejoin="round">
              <path d="M33 4L5 33l28 29" />
            </svg>
            <Badge>4615</Badge>
          </Back>
          <Title>
            <b>test</b>
            <span>bot</span>
          </Title>
          <Avatar>T</Avatar>
        </Nav>
      </Top>
      <Chat>
        <Bg />
        <DateChip>Today</DateChip>
        <List>
          <Bubble w={1013} tail time="8:29 AM">
            <SetPrice />
          </Bubble>
          <Group>
            <Bubble out w={514} time="8:30 AM">
              <Cmd>/postlocked</Cmd>
            </Bubble>
            <Bubble out tail w={544} time="8:30 AM">
              <Cmd>/post_locked</Cmd>
            </Bubble>
          </Group>
          <Bubble w={1078} tail time="8:30 AM">
            <EmojiSlot $w={82}>
              <MemoEmoji />
            </EmojiSlot>
            {"Create Locked Post\nChannel: Vi’s Degen Diary "}
            <EmojiSlot $w={66}>
              <WingsEmoji />
            </EmojiSlot>
            {'\n\nEnter a title for your post (optional).\nType "skip" to continue without a title:'}
          </Bubble>
          <Bubble out tail w={474} time="8:35 AM">
            <Cmd>/linkgroup</Cmd>
          </Bubble>
          <Bubble w={1061} tail time="8:35 AM">
            <EmojiSlot $w={82}>
              <CrossEmoji />
            </EmojiSlot>
            {"You haven't enabled paid group access.\nUse "}
            <BlueCmd>/setup</BlueCmd>
            {" to configure it."}
          </Bubble>
          <Bubble out tail w={391} time="8:35 AM">
            <Cmd>/setup</Cmd>
          </Bubble>
          <Bubble w={1013} tail time="8:35 AM">
            <SetPrice />
          </Bubble>
          <Bubble out tail w={279} time="8:35 AM">
            5
          </Bubble>
          <Bubble w={1011} tail time="8:35 AM" pb={55}>
            <EmojiSlot $w={82}>
              <CheckEmoji />
            </EmojiSlot>
            {"Title set: 5\n\nNow enter a teaser/preview text.\nThis will be shown publicly in the channel:"}
          </Bubble>
          <Bubble out tail w={391} time="8:35 AM">
            <Cmd>/setup</Cmd>
          </Bubble>
          <Bubble w={1013} tail time="8:35 AM">
            <SetPrice />
          </Bubble>
        </List>
        <JumpDown>
          <svg width="60" height="34" viewBox="0 0 60 34" fill="none" stroke="#5288f0" strokeWidth="4" strokeLinecap="round" strokeLinejoin="round">
            <path d="M2 3l28 28L58 3" />
          </svg>
        </JumpDown>
      </Chat>
      <Footer>
        <InputRow>
          <MenuButton>
            <Burger>
              <i />
              <i />
              <i />
            </Burger>
            Menu
          </MenuButton>
          <ClipSlot>
            <Paperclip size={78} strokeWidth={1.35} style={{ transform: "rotate(-8deg)" }} />
          </ClipSlot>
          <InputBox>
            Message
            <svg width="60" height="60" viewBox="0 0 60 60" fill="none" stroke="#7a7a7a" strokeWidth="4.5" strokeLinecap="round" strokeLinejoin="round">
              <path d="M30 3C15 3 3 15 3 30s12 27 27 27c14 0 27-12 27-25C40 32 28 20 28 3z" />
              <path d="M28 3c13 1 28 14 29 29" />
            </svg>
          </InputBox>
          <MicSlot>
            <svg width="56" height="74" viewBox="0 0 56 74" fill="none" stroke="#7a7a7a" strokeWidth="5" strokeLinecap="round">
              <rect x="16" y="3" width="24" height="46" rx="12" />
              <path d="M3 34c0 16 11 27 25 27s25-11 25-27M28 61v11" />
            </svg>
          </MicSlot>
        </InputRow>
        <HomeBar />
      </Footer>
    </Screen>
  );
}
